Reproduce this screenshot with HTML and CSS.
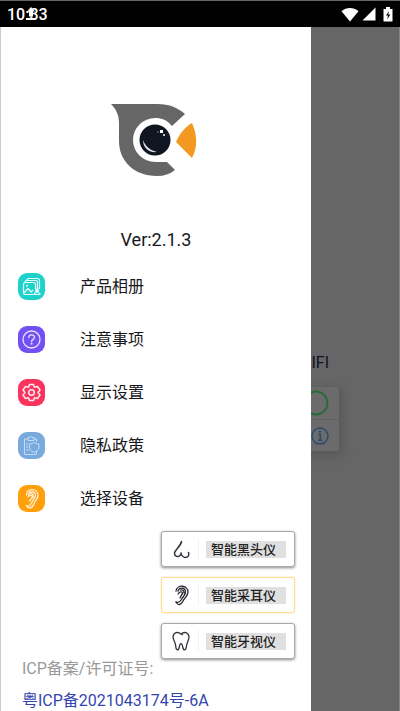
FILE: index.html
```html
<!DOCTYPE html>
<html lang="zh-CN">
<head>
<meta charset="utf-8">
<meta name="viewport" content="width=device-width, initial-scale=1">
<title>产品菜单</title>
<link rel="stylesheet" href="styles.css">
</head>
<body>
<header class="status">
  <div class="clock">
    <time>10:33</time>
    <svg class="upload" width="12" height="14" viewBox="0 0 12 14"><path d="M6 0L10 4.500H8V9.500H4V4.500H2zM1 11H11V13H1z" fill="#fff"/></svg>
  </div>
  <div class="signals">
    <svg width="18" height="15" viewBox="0 0 18 15"><path d="M.5 4.200C5.500-.1 12.500-.1 17.500 4.200L9 14.500z" fill="#fff"/></svg>
    <svg width="14" height="14" viewBox="0 0 14 14"><path d="M13.500.5V13.500H.5z" fill="#fff"/></svg>
    <svg class="battery" width="10" height="15" viewBox="0 0 10 15"><path d="M3 0H7V2H9.500V14.500H.5V2H3z" fill="#fff"/><path d="M6 4L3 8.500H5L4.200 12.500L7.300 7.500H5.200z" fill="#000"/></svg>
  </div>
</header>
<div class="screen">
  <main class="page">
    <h2 class="wifi">WIFI</h2>
    <div class="card">
      <div class="card-row"><svg width="26" height="26" viewBox="0 0 26 26"><circle cx="13" cy="13" r="11.500" fill="none" stroke="#246b38" stroke-width="1.800"/></svg></div>
      <div class="card-row"><svg width="26" height="26" viewBox="0 0 26 26"><circle cx="17" cy="13" r="8" fill="none" stroke="#29496f" stroke-width="1.400"/><path d="M15.300 11.500H17.300V17M15 17.200H19.300" fill="none" stroke="#29496f" stroke-width="1.600"/><circle cx="17" cy="8.600" r="1.200" fill="#29496f"/></svg></div>
    </div>
  </main>
  <aside class="drawer">
    <div class="brand">
      <svg class="logo" width="88" height="76" viewBox="0 0 88 76">
        <path d="M1 1H47C60 1 68 5 75 11L62 23C57 17 52 15 45 15A22 22 0 0 0 45 59H57L65 67C60 71 54 73 47 73C24 73 9 58 9 38V20C9 12 6 6 1 1Z" fill="#666"/>
        <circle cx="45" cy="37" r="15.500" fill="#101522"/>
        <path d="M33 37C33 45 39 50 47 49C41 47.500 35.500 44 33 37Z" fill="#dce2eb"/>
        <rect x="50" y="27" width="3" height="3" fill="#fff"/><circle cx="54" cy="32" r="1" fill="#fff"/><circle cx="48" cy="29" r=".6" fill="#fff"/>
        <path d="M66 39C70 30 75 24 82 20C87 31 88 44 82 55Z" fill="#f39820"/>
      </svg>
      <p class="version">Ver:2.1.3</p>
    </div>
    <nav class="menu">
      <a href="#album"><svg width="27" height="27" viewBox="0 0 27 27"><rect width="27" height="27" rx="9" fill="#1ed2cc"/><g fill="none" stroke="#e9ffff" stroke-width="1.200" stroke-linejoin="round"><path d="M9 7Q9 5.500 10.500 5.500H19.500Q21.500 5.500 21.500 7.500V16M7 9Q7 7.500 8.500 7.500H17.500Q19.500 7.500 19.500 9.500V16"/><path d="M15 21.500H7Q5.500 21.500 5.500 20V11.500Q5.500 9.500 7.500 9.500H15.500Q17.500 9.500 17.500 11.500V16M6 20L10 15.500L13 19L15 17"/><path d="M16 21.500Q16 19.500 19 19.500T22 21.500Z"/></g><circle cx="19" cy="17.500" r="2" fill="#e9ffff"/><circle cx="9" cy="12.800" r="1" fill="#e9ffff"/></svg><span>产品相册</span></a>
      <a href="#notes"><svg width="27" height="27" viewBox="0 0 27 27"><rect width="27" height="27" rx="9" fill="#7250f4"/><g fill="none" stroke="#e9e3ff" stroke-width="1.300" stroke-linecap="round"><circle cx="13.500" cy="13.500" r="8.500"/><path d="M10.800 11.500C10.800 8 16.500 8 16.500 11.300C16.500 13.400 13.600 13.300 13.600 15.500"/></g><circle cx="13.600" cy="17.800" r="1" fill="#e9e3ff"/></svg><span>注意事项</span></a>
      <a href="#display"><svg width="27" height="27" viewBox="0 0 27 27"><rect width="27" height="27" rx="9" fill="#fb335f"/><g fill="none" stroke="#ffe8ed" stroke-width="1.500" stroke-linejoin="round"><path d="M11.500 5.500H15.500L16.500 8.200L19.500 7.500L22 11L20 13.500L22 16L19.500 19.500L16.500 18.800L15.500 21.500H11.500L10.500 18.800L7.500 19.500L5 16L7 13.500L5 11L7.500 7.500L10.500 8.200Z"/><circle cx="13.500" cy="13.500" r="2.800"/></g></svg><span>显示设置</span></a>
      <a href="#privacy"><svg width="27" height="27" viewBox="0 0 27 27"><rect width="27" height="27" rx="9" fill="#78aade"/><g fill="none" stroke="#c2dcf7" stroke-width="1"><path d="M10 7H6.500V22.500H18.500V19M18.500 10V7H16M10 8.500V5.500H12Q13 3 14 5.500H16V8.500Z"/><path d="M11.500 12Q14.500 12 16 10.500Q18 12 21 12V16Q20 19 16 20.500Q12 19 11.500 16Z"/><path d="M8 12H10M8 15H10M8 18H11"/></g></svg><span>隐私政策</span></a>
      <a href="#device"><svg width="27" height="27" viewBox="0 0 27 27"><rect width="27" height="27" rx="9" fill="#ff9f0b"/><g fill="none" stroke="#fff0d6" stroke-width="1.300" stroke-linecap="round"><path d="M8.500 10C8 3.500 19 2.500 20 9.500C20.500 14 17 15.500 15.500 19.500C14 24 10 24 8.500 20.500"/><path d="M10.500 10C11 5.500 17 5.500 17.500 10C17.700 13 15 14.500 13.500 18C12.500 20.500 10 22 8.500 20.500M10 12C13 8.500 15.500 11 13.500 13.500L11.500 16M12.500 8.500Q16 8 15 12.500"/></g></svg><span>选择设备</span></a>
    </nav>
    <div class="devices">
      <button type="button" class="device"><svg width="20" height="22" viewBox="0 0 20 22"><path d="M9.500 3.500C8.500 9 2.500 12 2.500 15.500C2.500 18.500 6 19.500 8 17.500C9 16 9.500 15 9 15C8.500 16 11 19.500 13 19.500C16.500 19.500 17.500 17 16.500 14.500" fill="none" stroke="#30343a" stroke-width="1.500" stroke-linecap="round"/></svg><span class="label">智能黑头仪</span></button>
      <button type="button" class="device active"><svg width="20" height="22" viewBox="0 0 20 22"><g fill="none" stroke="#25282d" stroke-width="1.300" stroke-linecap="round"><path d="M4 7C5 0 16 1 16 8C16 12 13 13 11 17C9 21 6 22 4 18"/><path d="M6 7C7 3 13 3 13.500 7.500C14 11 11 12 9.500 15.500C8 18 6 19 4 18M6 10C9 5.500 12 9 9.500 11L8 14M8.500 6Q12 5 12 9"/></g></svg><span class="label">智能采耳仪</span></button>
      <button type="button" class="device"><svg width="20" height="22" viewBox="0 0 20 22"><path d="M9 4C6 1.500 1.500 2 1 7C1 10 3.500 12 3.700 16C4 21 6.500 21 7.300 17C8 12.500 10 12.500 10.700 17C11.500 21 14 21 14.500 16C15 12 17 10 17 7C16.500 2 12 1.500 9 4ZM9 4L11 5" fill="none" stroke="#30343a" stroke-width="1.300" stroke-linejoin="round"/></svg><span class="label">智能牙视仪</span></button>
    </div>
    <footer class="record">
      <span>ICP备案/许可证号:</span>
      <a href="#record">粤ICP备2021043174号-6A</a>
    </footer>
  </aside>
</div>
</body>
</html>
```
FILE: styles.css
```css
* {
  box-sizing: border-box;
}

body {
  margin: 0;
  min-height: 100vh;
  display: flex;
  flex-direction: column;
  background: #666;
  color: #16181c;
  font-family: Roboto, "Noto Sans CJK SC", sans-serif;
}

svg {
  display: block;
  flex: none;
}

.status {
  height: 27px;
  padding: 0 7px;
  display: flex;
  align-items: center;
  justify-content: space-between;
  background: #000;
  border-top: 1px solid #666;
  color: #fff;
  font-size: 16px;
  font-weight: 500;
}

.clock {
  position: relative;
}

.upload {
  position: absolute;
  left: 18px;
  top: 2px;
}

.signals {
  display: flex;
  align-items: center;
  gap: 3px;
}

.battery {
  margin-left: 4px;
}

.screen {
  flex: 1;
  position: relative;
  display: flex;
}

.page {
  position: absolute;
  inset: 0;
  padding: 326px 60px 0;
  overflow: hidden;
  background: #666;
  border-right: 1px solid #858585;
}

.wifi {
  margin: 0;
  padding-right: 10px;
  line-height: 20px;
  color: #101322;
  font-size: 16px;
  font-weight: 400;
  text-align: right;
}

.card {
  margin-top: 14px;
  background: #6b6b6b;
  box-shadow: 2px 3px 8px 2px #595959;
}

.card-row {
  height: 32px;
  padding-right: 10px;
  display: flex;
  align-items: center;
  justify-content: flex-end;
}

.card-row + .card-row {
  border-top: 1px solid #606060;
}

.drawer {
  position: relative;
  width: 311px;
  background: #fff;
  border-left: 1px solid #ccc;
  border-bottom: 1px solid #aaa;
}

.brand {
  padding: 76px 4px 0 0;
  display: flex;
  flex-direction: column;
  align-items: center;
}

.version {
  margin: 49px 0 0 4px;
  line-height: 24px;
  font-size: 18px;
}

.menu {
  margin-top: 8px;
}

.menu a {
  height: 53px;
  padding-left: 17px;
  display: flex;
  align-items: center;
  gap: 35px;
  color: inherit;
  font-size: 16px;
  text-decoration: none;
}

.menu span {
  padding-bottom: 3px;
}

.devices {
  margin: 6px 16px 0 0;
  display: flex;
  flex-direction: column;
  align-items: flex-end;
  gap: 10px;
}

.device {
  width: 134px;
  height: 36px;
  padding: 0 8px 0 10px;
  display: flex;
  align-items: center;
  background: #fff;
  border: 1px solid #aaa;
  border-radius: 3px;
  box-shadow: 0 1px 3px #888;
  color: #222;
  font: inherit;
  font-size: 13px;
}

.device.active {
  border-color: #ffdc91;
  box-shadow: 0 0 2px #ffe3a8;
}

.device svg {
  width: 26px;
  padding-right: 6px;
  box-sizing: content-box;
  width: 20px;
  border-right: 1px solid #f2f2f2;
}

.label {
  flex: 1;
  margin-left: 7px;
  padding-left: 5px;
  line-height: 17px;
  background: #e0e0e0;
  text-align: left;
  white-space: nowrap;
  font-weight: 500;
}

.record {
  padding-left: 21px;
  display: flex;
  flex-direction: column;
  gap: 12px;
  line-height: 20px;
  color: #999;
  font-size: 16px;
}

.record a {
  color: #3445b0;
  text-decoration: none;
}
```
